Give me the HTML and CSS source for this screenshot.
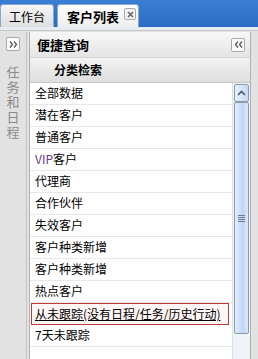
FILE: index.html
```html
<!DOCTYPE html>
<html lang="zh">
<head>
    <meta charset="UTF-8">
    <title>客户列表</title>
    <link rel="stylesheet" href="styles.css">
</head>
<body>
    <div class="tabbar">
        <div class="tab">工作台</div>
        <div class="tab active">客户列表
            <span class="tab-close">
                <svg width="9" height="9" viewBox="0 0 9 9"><path d="M2 2 L7 7 M7 2 L2 7" stroke="#666" stroke-width="1.6"/></svg>
            </span>
        </div>
    </div>
    <div class="tab-line"></div>

    <div class="main">
        <!-- collapsed west panel -->
        <div class="side-strip">
            <span class="mini-btn">
                <svg width="9" height="7" viewBox="0 0 9 7"><path d="M1 0.5 L3.5 3.5 L1 6.5 M5 0.5 L7.5 3.5 L5 6.5" fill="none" stroke="#555" stroke-width="1.2"/></svg>
            </span>
            <div class="side-title">任务和日程</div>
        </div>

        <div class="panel">
            <div class="panel-head">
                <span>便捷查询</span>
                <span class="mini-btn">
                    <svg width="9" height="7" viewBox="0 0 9 7"><path d="M4 0.5 L1.5 3.5 L4 6.5 M8 0.5 L5.5 3.5 L8 6.5" fill="none" stroke="#555" stroke-width="1.2"/></svg>
                </span>
            </div>
            <div class="list-head">分类检索</div>
            <div class="list-body">
                <ul class="list">
                    <li>全部数据</li>
                    <li>潜在客户</li>
                    <li>普通客户</li>
                    <li><span class="vip">VIP</span>客户</li>
                    <li>代理商</li>
                    <li>合作伙伴</li>
                    <li>失效客户</li>
                    <li>客户种类新增</li>
                    <li>客户种类新增</li>
                    <li>热点客户</li>
                    <li class="selected"><span class="link">从未跟踪(没有日程/任务/历史行动)</span></li>
                    <li>7天未跟踪</li>
                </ul>
                <div class="scrollbar">
                    <div class="scroll-up">
                        <svg width="9" height="6" viewBox="0 0 9 6"><path d="M1 5 L4.5 1.5 L8 5" fill="none" stroke="#4a5a70" stroke-width="1.6"/></svg>
                    </div>
                    <div class="scroll-thumb">
                        <span class="grip"></span>
                    </div>
                </div>
            </div>
        </div>

        <div class="east-strip"></div>
    </div>
</body>
</html>
```

FILE: styles.css
```css
body {
  margin: 0;
  width: 258px;
  height: 359px;
  overflow: hidden;
  background: #ffffff;
  font-family: "Noto Sans CJK SC", "Liberation Sans", sans-serif;
  font-size: 12px;
  color: #000;
}

.tabbar {
  height: 27px;
  display: flex;
  align-items: flex-end;
  gap: 3px;
  background: linear-gradient(#3a7fd4, #2a6cc4);
  box-sizing: border-box;
}

.tab {
  height: 23px;
  width: 54px;
  box-sizing: border-box;
  display: flex;
  align-items: center;
  justify-content: center;
  font-size: 12px;
  background: linear-gradient(#f6f6f6, #dedede);
  border: 1px solid #8aa6cc;
  border-bottom: none;
  border-radius: 3px 3px 0 0;
}

.tab.active {
  width: 82px;
  justify-content: flex-start;
  padding-left: 9px;
  gap: 5px;
  font-weight: bold;
  font-size: 13px;
  background: linear-gradient(#ffffff, #eeeeee);
}

.tab-close {
  width: 10px;
  height: 10px;
  border: 1px solid #aaa;
  border-radius: 2px;
  background: #f2f2f2;
  display: flex;
  align-items: center;
  justify-content: center;
  margin-top: -4px;
}

.tab-line {
  height: 3px;
  background: #e6ebf3;
  border-bottom: 1px solid #c8c8c8;
}

.main {
  display: flex;
  height: 328px;
  padding-top: 1px;
  background: #e2e2e2;
}

.side-strip {
  width: 27px;
  border-right: 1px solid #c4c4c4;
  display: flex;
  flex-direction: column;
  align-items: center;
  padding-top: 5px;
  box-sizing: border-box;
}

.mini-btn {
  width: 12px;
  height: 12px;
  border: 1px solid #a8a8a8;
  border-radius: 2px;
  background: #fafafa;
  display: flex;
  align-items: center;
  justify-content: center;
}

.side-title {
  margin-top: 13px;
  width: 14px;
  font-size: 13px;
  line-height: 15px;
  color: #8a8a8a;
  text-align: center;
}

.panel {
  flex: 1;
  margin-left: 2px;
  display: flex;
  flex-direction: column;
  background: #fff;
  border-left: 1px solid #b0b0b0;
  border-right: 1px solid #b0b0b0;
}

.panel-head {
  height: 25px;
  display: flex;
  align-items: center;
  justify-content: space-between;
  padding: 0 5px 0 7px;
  font-weight: bold;
  font-size: 13px;
  background: linear-gradient(#f8f8f8, #e4e4e4);
  border-bottom: 1px solid #d4d4d4;
}

.list-head {
  height: 24px;
  line-height: 23px;
  padding-left: 24px;
  font-weight: bold;
  font-size: 12px;
  background: linear-gradient(#f2f2f2, #dedede);
  border-bottom: 1px solid #c8c8c8;
}

.list-body {
  flex: 1;
  display: flex;
  overflow: hidden;
}

.list {
  flex: 1;
  list-style: none;
  margin: 0;
  padding: 0;
}

.list li {
  height: 21px;
  line-height: 20px;
  padding-left: 5px;
  border-bottom: 1px solid #e8e8e8;
  white-space: nowrap;
}

.vip {
  color: #6a3a8a;
}

.list li.selected {
  margin: 0 3px 0 1px;
  padding-left: 3px;
  border: 1px solid #c03a3a;
  background: #fff6f6;
  height: 20px;
  line-height: 19px;
}

.link {
  text-decoration: underline;
}

.scrollbar {
  width: 17px;
  display: flex;
  flex-direction: column;
  background: #f0f3f8;
  border-left: 1px solid #e0e0e0;
}

.scroll-up {
  height: 16px;
  margin: 1px 1px 0;
  border: 1px solid #8a9ab0;
  border-radius: 2px;
  background: linear-gradient(90deg, #e8f0fc, #c6d9f4);
  display: flex;
  align-items: center;
  justify-content: center;
}

.scroll-thumb {
  height: 230px;
  margin: 0 1px;
  border: 1px solid #8a9ab0;
  border-radius: 2px;
  background: linear-gradient(90deg, #e4edfb, #c2d6f2 60%, #dce8f8);
  display: flex;
  align-items: center;
  justify-content: center;
}

.grip {
  width: 7px;
  height: 7px;
  background: repeating-linear-gradient(#6a7a90 0 1px, transparent 1px 2px);
}

.east-strip {
  width: 6px;
  margin-left: 1px;
  background: #e2e2e2;
}
```
